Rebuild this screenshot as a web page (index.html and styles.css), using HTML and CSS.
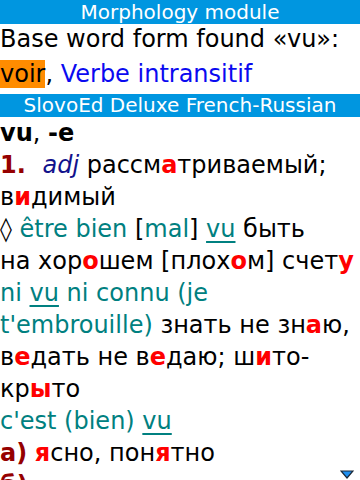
FILE: index.html
```html
<!DOCTYPE html>
<html lang="fr">
<head>
    <meta charset="UTF-8">
    <meta name="viewport" content="width=device-width, initial-scale=1.0">
    <title>Morphology module</title>
    <link rel="stylesheet" href="styles.css">
</head>
<body>
    <div class="screen">
        <div class="bar top">Morphology module</div>

        <div class="morph">
            <p>Base word form found «vu»:</p>
            <p class="form"><span class="hit">voir</span>, <span class="pos">Verbe intransitif</span></p>
        </div>

        <div class="bar">SlovoEd Deluxe French-Russian</div>

        <div class="article">
            <p><b>vu</b>, <b>-e</b></p>
            <p><span class="num sense">1.</span> <i class="lbl">adj</i> рассм<span class="st">а</span>триваемый; в<span class="st">и</span>димый</p>
            <p>◊ <span class="fr">être bien</span> [<span class="fr">mal</span>] <span class="fr ref">vu</span> быть на&nbsp;хор<span class="st">о</span>шем [плох<span class="st">о</span>м] счет<span class="st">у</span></p>
            <p><span class="fr">ni <span class="ref">vu</span> ni connu (je t'embrouille)</span> знать не зн<span class="st">а</span>ю, в<span class="st">е</span>дать не в<span class="st">е</span>даю; ш<span class="st">и</span>то-кр<span class="st">ы</span>то</p>
            <p><span class="fr">c'est (bien) <span class="ref">vu</span></span></p>
            <p><span class="num">а)</span> <span class="st">я</span>сно, пон<span class="st">я</span>тно</p>
            <p><span class="num">б)</span></p>
        </div>

        <svg class="scroll-down" width="14" height="9" viewBox="0 0 14 9">
            <polygon points="1,1 13,1 7,8" fill="#1e8ff0" stroke="#1b2838" stroke-width="1.2"/>
        </svg>
    </div>
</body>
</html>
```

FILE: styles.css
```css
body {
  margin: 0;
  font-family: "DejaVu Sans", "Noto Sans", sans-serif;
  background: #fff;
}

.screen {
  position: relative;
  width: 360px;
  height: 480px;
  overflow: hidden;
}

p {
  margin: 0;
}

.bar {
  background-color: #0096e0;
  color: white;
  font-size: 20px;
  line-height: 23px;
  text-align: center;
  white-space: nowrap;
}

.bar.top {
  line-height: 24px;
}

.morph {
  font-size: 24px;
  line-height: 31.5px;
  color: #000;
  padding-bottom: 4px;
}

.morph .form {
  margin-top: 3px;
}

.hit {
  background-color: #ff8c00;
}

.pos {
  color: #0a0af0;
}

.article {
  font-size: 24px;
  line-height: 32px;
  color: #000;
}

.num {
  color: #950000;
  font-weight: bold;
}

.num.sense {
  margin-right: 9px;
}

.lbl {
  color: #12128c;
}

.st {
  color: #ff0000;
  font-weight: bold;
}

.fr {
  color: #008080;
}

.ref {
  text-decoration: underline;
  text-decoration-thickness: 2px;
  text-underline-offset: 4px;
}

.scroll-down {
  position: absolute;
  right: 6px;
  bottom: 1px;
}
```
